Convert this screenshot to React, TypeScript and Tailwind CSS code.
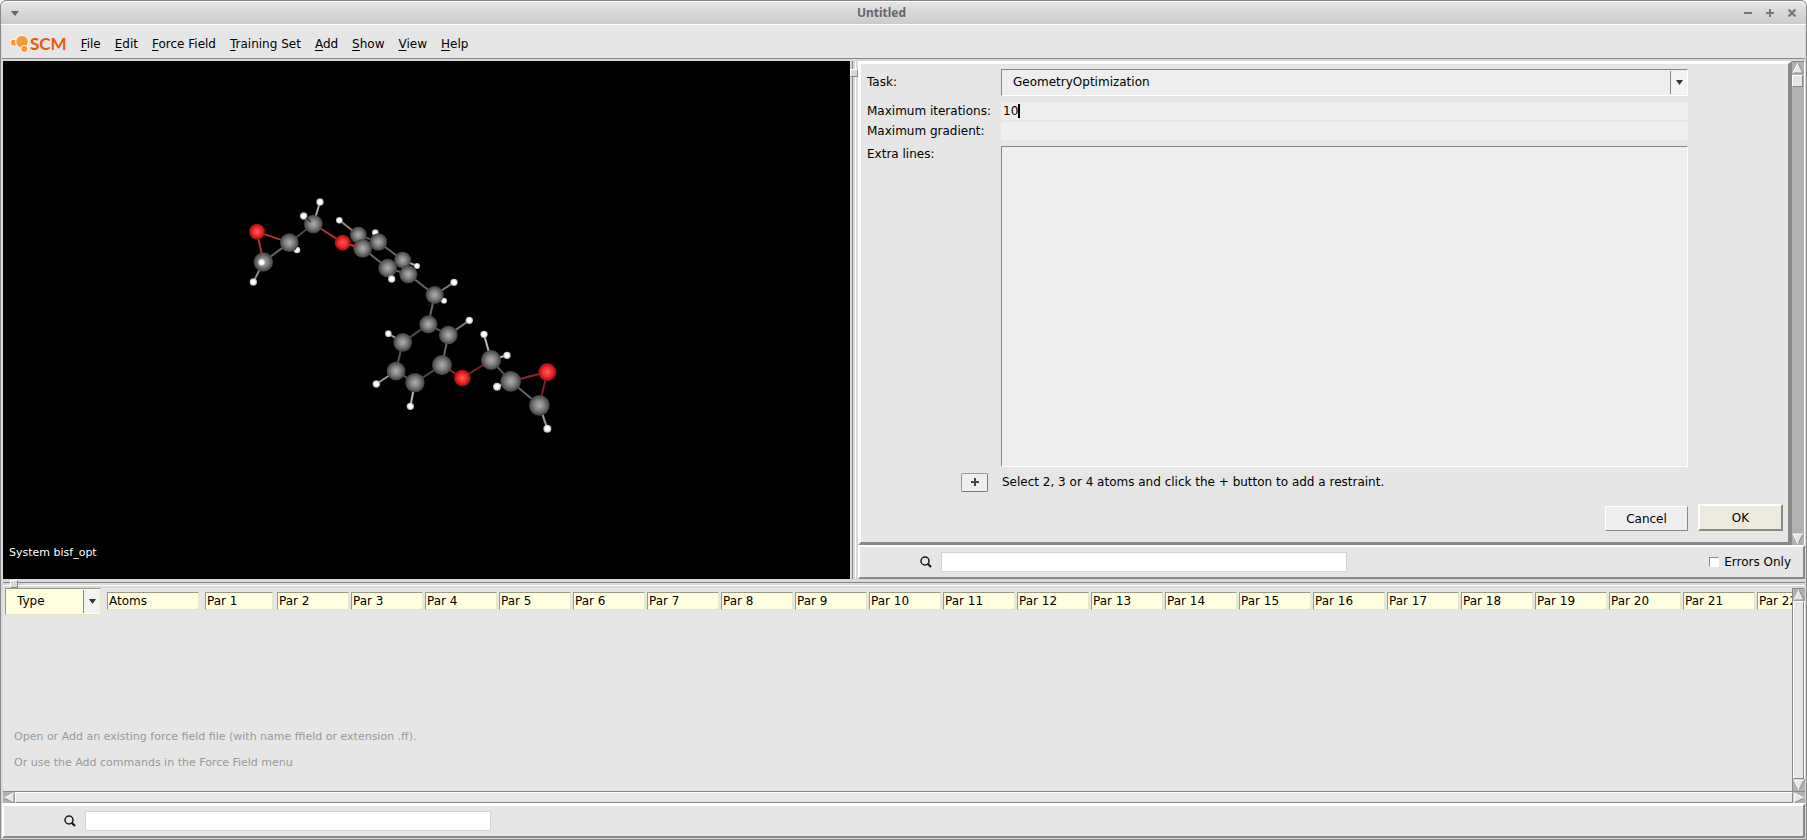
import { useState } from "react";

type Atom = { x: number; y: number; r: number; kind: "c" | "o" | "h" };

const bonds: [number, number, number, number, string][] = [
  [81, 155, 178, 188, "#b03434"],
  [81, 155, 100, 246, "#b03434"],
  [178, 188, 100, 246, "#666"],
  [178, 188, 250, 132, "#4a4a4a"],
  [178, 188, 201, 210, "#aaa"],
  [100, 246, 70, 306, "#888"],
  [250, 132, 270, 66, "#aaa"],
  [250, 132, 338, 188, "#b03434"],
  [338, 188, 398, 205, "#a02c2c"],
  [328, 121, 385, 165, "#888"],
  [436, 158, 445, 186, "#aaa"],
  [385, 165, 398, 205, "#555"],
  [385, 165, 445, 186, "#555"],
  [445, 186, 518, 240, "#666"],
  [398, 205, 473, 264, "#666"],
  [473, 264, 535, 283, "#666"],
  [518, 240, 535, 283, "#555"],
  [518, 240, 561, 258, "#aaa"],
  [473, 264, 485, 297, "#bbb"],
  [535, 283, 614, 345, "#666"],
  [614, 345, 672, 307, "#777"],
  [614, 345, 642, 362, "#aaa"],
  [614, 345, 595, 433, "#666"],
  [595, 433, 655, 465, "#555"],
  [595, 433, 518, 487, "#4a4a4a"],
  [655, 465, 718, 421, "#777"],
  [655, 465, 636, 555, "#666"],
  [518, 487, 475, 461, "#999"],
  [518, 487, 498, 573, "#555"],
  [498, 573, 439, 612, "#999"],
  [498, 573, 555, 608, "#555"],
  [555, 608, 541, 679, "#bbb"],
  [555, 608, 636, 555, "#4a4a4a"],
  [636, 555, 697, 594, "#9c2a2a"],
  [697, 594, 783, 540, "#7a2222"],
  [783, 540, 762, 463, "#bbb"],
  [783, 540, 831, 526, "#bbb"],
  [783, 540, 842, 604, "#555"],
  [842, 604, 801, 620, "#bbb"],
  [842, 604, 952, 576, "#8c2626"],
  [842, 604, 928, 676, "#666"],
  [952, 576, 928, 676, "#7a2222"],
  [928, 676, 952, 746, "#999"],
];

const atoms: Atom[] = [
  { x: 201, y: 210, r: 10, kind: "h" },
  { x: 81, y: 155, r: 24, kind: "o" },
  { x: 178, y: 188, r: 28, kind: "c" },
  { x: 100, y: 246, r: 29, kind: "c" },
  { x: 95, y: 247, r: 11, kind: "h" },
  { x: 70, y: 306, r: 11, kind: "h" },
  { x: 250, y: 132, r: 28, kind: "c" },
  { x: 221, y: 108, r: 11, kind: "h" },
  { x: 270, y: 66, r: 11, kind: "h" },
  { x: 328, y: 121, r: 10, kind: "h" },
  { x: 436, y: 158, r: 10, kind: "h" },
  { x: 385, y: 165, r: 25, kind: "c" },
  { x: 445, y: 186, r: 26, kind: "c" },
  { x: 338, y: 188, r: 24, kind: "o" },
  { x: 398, y: 205, r: 28, kind: "c" },
  { x: 518, y: 240, r: 25, kind: "c" },
  { x: 561, y: 258, r: 9, kind: "h" },
  { x: 473, y: 264, r: 28, kind: "c" },
  { x: 535, y: 283, r: 27, kind: "c" },
  { x: 485, y: 297, r: 11, kind: "h" },
  { x: 642, y: 362, r: 9, kind: "h" },
  { x: 614, y: 345, r: 27, kind: "c" },
  { x: 672, y: 307, r: 11, kind: "h" },
  { x: 595, y: 433, r: 27, kind: "c" },
  { x: 655, y: 465, r: 28, kind: "c" },
  { x: 718, y: 421, r: 11, kind: "h" },
  { x: 475, y: 461, r: 10, kind: "h" },
  { x: 518, y: 487, r: 28, kind: "c" },
  { x: 498, y: 573, r: 28, kind: "c" },
  { x: 439, y: 612, r: 11, kind: "h" },
  { x: 555, y: 608, r: 29, kind: "c" },
  { x: 541, y: 679, r: 11, kind: "h" },
  { x: 636, y: 555, r: 30, kind: "c" },
  { x: 697, y: 594, r: 25, kind: "o" },
  { x: 831, y: 526, r: 11, kind: "h" },
  { x: 783, y: 540, r: 30, kind: "c" },
  { x: 762, y: 463, r: 11, kind: "h" },
  { x: 842, y: 604, r: 31, kind: "c" },
  { x: 801, y: 620, r: 12, kind: "h" },
  { x: 952, y: 576, r: 27, kind: "o" },
  { x: 928, y: 676, r: 31, kind: "c" },
  { x: 952, y: 746, r: 12, kind: "h" },
];

const atomFill = { c: "url(#carbon)", o: "url(#oxygen)", h: "url(#hydrogen)" };

const menus = ["File", "Edit", "Force Field", "Training Set", "Add", "Show", "View", "Help"];

const params = Array.from({ length: 22 }, (_, i) => `Par ${i + 1}`);

const Molecule = () => (
  <svg viewBox="-681 -357 2541 1554" className="block h-full w-full" aria-label="Molecule">
    <defs>
      <radialGradient id="carbon">
        <stop offset="0" stopColor="#b0b0b0" />
        <stop offset="0.5" stopColor="#808080" />
        <stop offset="1" stopColor="#404040" />
      </radialGradient>
      <radialGradient id="oxygen">
        <stop offset="0" stopColor="#ff5c5c" />
        <stop offset="0.6" stopColor="#f02424" />
        <stop offset="1" stopColor="#8c1010" />
      </radialGradient>
      <radialGradient id="hydrogen">
        <stop offset="0.5" stopColor="#fff" />
        <stop offset="1" stopColor="#aaa" />
      </radialGradient>
    </defs>
    {bonds.map(([x1, y1, x2, y2, color], i) => (
      <line key={i} x1={x1} y1={y1} x2={x2} y2={y2} stroke={color} strokeWidth="6" />
    ))}
    {atoms.map((atom, i) => (
      <circle key={i} cx={atom.x} cy={atom.y} r={atom.r} fill={atomFill[atom.kind]} />
    ))}
    <line x1="229" y1="113" x2="242" y2="126" stroke="#333" strokeWidth="5" />
    <line x1="355" y1="193" x2="380" y2="200" stroke="#b42a2a" strokeWidth="6" />
  </svg>
);

const Logo = () => (
  <div className="flex items-center">
    <svg width="20" height="18" viewBox="0 0 60 54">
      <g fill="#f39a3f" stroke="#fff" strokeWidth="3">
        <circle cx="12" cy="23" r="11" />
        <circle cx="36" cy="20" r="19" />
        <circle cx="43" cy="42" r="11" />
      </g>
    </svg>
    <span className="font-['Lato'] text-[17px] leading-5 font-bold text-[#e8590c]">SCM</span>
  </div>
);

const SearchIcon = () => (
  <svg width="12" height="12" viewBox="0 0 12 12" fill="none" stroke="#1a1a1a">
    <circle cx="5" cy="5" r="4" strokeWidth="1.5" />
    <path d="M7.5 7.5 L11 11" strokeWidth="2.2" />
  </svg>
);

const ArrowButton = ({ dir }: { dir: "up" | "down" | "left" | "right" }) => {
  const shapes = {
    up: { fill: "6,1 11,11 1,11", light: "6,1 1,11", dark: "6,1 11,11 1,11" },
    down: { fill: "1,1 11,1 6,11", light: "11,1 1,1 6,11", dark: "11,1 6,11" },
    left: { fill: "1,6 11,1 11,11", light: "1,6 11,1", dark: "11,1 11,11 1,6" },
    right: { fill: "1,1 11,6 1,11", light: "1,11 1,1 11,6", dark: "1,11 11,6" },
  };
  const s = shapes[dir];
  return (
    <button aria-label={`Scroll ${dir}`} className="block h-3 w-3 shrink-0 bg-[#b1b1b1]">
      <svg width="12" height="12" viewBox="0 0 12 12" fill="none">
        <polygon points={s.fill} fill="#e6e6e6" />
        <polyline points={s.dark} stroke="#888" />
        <polyline points={s.light} stroke="#fff" />
      </svg>
    </button>
  );
};

const Arrow = () => (
  <svg width="7" height="5" viewBox="0 0 7 5">
    <path d="M0 0 H7 L3.5 5 Z" fill="#333" />
  </svg>
);

export default function App() {
  const [task, setTask] = useState("GeometryOptimization");
  const [iterations, setIterations] = useState("10");
  const [gradient, setGradient] = useState("");
  const [extra, setExtra] = useState("");

  return (
    <div className="flex h-screen min-h-[720px] flex-col overflow-hidden rounded-t-md border border-[#888] bg-[#d9d9d9] font-['DejaVu_Sans',sans-serif] text-xs text-black">
      {/* Title bar */}
      <header className="flex h-6 shrink-0 items-center rounded-t-md border-y border-white bg-linear-to-b from-[#e4e4e4] to-[#cbcbcb] px-2.5">
        <button aria-label="Window menu">
          <svg width="8" height="5" viewBox="0 0 8 5">
            <path d="M0 0 H8 L4 5 Z" fill="#666" />
          </svg>
        </button>
        <h1 className="flex-1 text-center font-['Noto_Sans',sans-serif] font-bold text-[#666]">Untitled</h1>
        <div className="flex gap-3.5">
          <button aria-label="Minimize">
            <svg width="8" height="8" viewBox="0 0 8 8" stroke="#777" strokeWidth="2">
              <path d="M0 4 H8" />
            </svg>
          </button>
          <button aria-label="Maximize">
            <svg width="8" height="8" viewBox="0 0 8 8" stroke="#777" strokeWidth="2">
              <path d="M0 4 H8 M4 0 V8" />
            </svg>
          </button>
          <button aria-label="Close">
            <svg width="8" height="8" viewBox="0 0 8 8" stroke="#777" strokeWidth="2.2">
              <path d="M0.5 0.5 L7.5 7.5 M7.5 0.5 L0.5 7.5" />
            </svg>
          </button>
        </div>
      </header>

      {/* Menu bar */}
      <nav className="mx-px flex h-[34px] shrink-0 items-center border-b border-[#888] bg-[#e6e6e6] pt-1 pl-2">
        <Logo />
        <div className="ml-3.5 flex gap-3.5">
          {menus.map((menu) => (
            <button key={menu}>
              <span className="underline underline-offset-2">{menu[0]}</span>
              {menu.slice(1)}
            </button>
          ))}
        </div>
      </nav>

      <main className="flex min-h-0 flex-1 flex-col pt-0.5 pr-px pl-0.5">
        <div className="flex">
          {/* Viewer */}
          <section className="relative flex-[847_1_0%] bg-black">
            <div className="absolute inset-0">
              <Molecule />
            </div>
            <p className="absolute bottom-[18px] left-1.5 text-[11px] leading-4 text-white">System bisf_opt</p>
          </section>

          <div className="relative w-2 px-0.5">
            <div className="h-full border-x border-l-[#888] border-r-white" />
            <div className="absolute top-2 left-0 h-2 w-2 border border-t-white border-r-[#888] border-b-[#888] border-l-white bg-[#d9d9d9]" />
          </div>

          {/* Settings */}
          <section className="flex flex-[947_1_0%] flex-col">
            <div className="flex">
              <form
                className="flex-1 border-t-3 border-r-4 border-b-3 border-l-3 border-t-white border-r-[#888] border-b-[#888] border-l-white bg-[#e6e6e6] pt-[5px] pb-[11px] pl-1.5"
                onSubmit={(e) => e.preventDefault()}
              >
                <div className="grid grid-cols-[134px_1fr] pr-[100px]">
                  <label htmlFor="task" className="leading-[27px]">Task:</label>
                  <div className="relative mb-1.5 h-[27px] border border-t-[#888] border-r-white border-b-white border-l-[#888]">
                    <select
                      id="task"
                      value={task}
                      onChange={(e) => setTask(e.target.value)}
                      className="h-full w-full appearance-none bg-[#eee] pb-0.5 pl-[11px] outline-none"
                    >
                      <option>GeometryOptimization</option>
                    </select>
                    <span className="pointer-events-none absolute inset-y-px right-0 flex w-[17px] items-center justify-center border-l border-[#888] bg-[#f3f3f3]">
                      <Arrow />
                    </span>
                  </div>

                  <label htmlFor="iterations" className="leading-[18px]">Maximum iterations:</label>
                  <div className="relative mb-0.5 h-[18px]">
                    <input
                      id="iterations"
                      value={iterations}
                      onChange={(e) => setIterations(e.target.value)}
                      className="block h-full w-full bg-[#eee] px-0.5 outline-none"
                    />
                    <span className="absolute top-0.5 left-[17px] h-3.5 w-0.5 bg-black" />
                  </div>

                  <label htmlFor="gradient" className="leading-[18px]">Maximum gradient:</label>
                  <input
                    id="gradient"
                    value={gradient}
                    onChange={(e) => setGradient(e.target.value)}
                    className="mb-1.5 block h-[18px] bg-[#eee] px-0.5 outline-none"
                  />

                  <label htmlFor="extra" className="leading-4">Extra lines:</label>
                  <textarea
                    id="extra"
                    value={extra}
                    onChange={(e) => setExtra(e.target.value)}
                    className="block h-[321px] resize-none border border-t-[#888] border-r-white border-b-white border-l-[#888] bg-[#eee] p-1 outline-none"
                  />
                </div>
                <div className="mt-[5px] flex h-5 items-center">
                  <button
                    type="button"
                    aria-label="Add restraint"
                    className="ml-[94px] flex h-[19px] w-[27px] items-center justify-center rounded-xs border border-t-[#999] border-r-[#777] border-b-[#777] border-l-[#999] bg-[#eee]"
                  >
                    <svg width="8" height="8" viewBox="0 0 8 8" stroke="#444" strokeWidth="2">
                      <path d="M0 4 H8 M4 0 V8" />
                    </svg>
                  </button>
                  <p className="ml-3.5">Select 2, 3 or 4 atoms and click the + button to add a restraint.</p>
                </div>
                <div className="mt-3 flex items-end justify-end gap-2.5 pr-[5px]">
                  <button
                    type="button"
                    className="h-[25px] w-[83px] border border-t-white border-r-[#888] border-b-[#888] border-l-white bg-[#eee]"
                  >
                    Cancel
                  </button>
                  <button
                    type="submit"
                    className="h-[27px] w-[85px] border-2 border-t-white border-r-[#8c8a80] border-b-[#8c8a80] border-l-white bg-[#ece9df]"
                  >
                    OK
                  </button>
                </div>
              </form>
              <div className="flex w-[13px] flex-col border-t border-r border-t-[#888] border-r-white bg-[#b1b1b1]">
                <ArrowButton dir="up" />
                <div className="mt-px h-3 w-[11px] border border-t-white border-r-[#888] border-b-[#888] border-l-white bg-[#e6e6e6]" />
                <div className="flex-1" />
                <ArrowButton dir="down" />
              </div>
            </div>

            <div className="flex h-[34px] items-center border-2 border-t-white border-r-[#888] border-b-[#888] border-l-white bg-[#e6e6e6] pl-[60px]">
              <SearchIcon />
              <input aria-label="Search settings" className="ml-[9px] h-5 w-[406px] border border-[#d5d5d5] bg-white px-1 outline-none" />
              <label className="mr-3 ml-auto flex items-center gap-[5px]">
                <input
                  type="checkbox"
                  className="h-2.5 w-2.5 appearance-none border border-t-[#888] border-r-white border-b-white border-l-[#888] bg-white"
                />
                Errors Only
              </label>
            </div>
          </section>
        </div>

        <div className="relative h-[9px] shrink-0 pt-[3px]">
          <div className="h-1 border-y border-t-[#888] border-b-white" />
          <div className="absolute top-px left-[7px] h-2 w-2 border border-t-white border-r-[#888] border-b-[#888] border-l-white bg-[#d9d9d9]" />
        </div>

        {/* Parameters */}
        <div className="flex min-h-0 flex-1 bg-[#e6e6e6]">
          <section className="relative min-w-0 flex-1 overflow-hidden">
            <table className="block">
              <thead className="block">
                <tr className="flex items-start pl-0.5">
                  <th className="relative mr-1.5 h-[27px] w-24 shrink-0 border border-t-[#999988] border-r-[#e6e6c0] border-b-[#e6e6c0] border-l-[#999988] font-normal">
                    <select aria-label="Type" className="block h-full w-full appearance-none bg-[#ffffe0] pb-0.5 pl-[11px] outline-none">
                      <option>Type</option>
                    </select>
                    <span className="pointer-events-none absolute inset-y-px right-0 flex w-[17px] items-center justify-center border-l border-[#888] bg-[#f3f3f3]">
                      <Arrow />
                    </span>
                  </th>
                  <th className="mt-1 mr-1.5 h-[18px] w-[92px] shrink-0 border border-t-[#999988] border-r-[#e6e6c0] border-b-[#e6e6c0] border-l-[#999988] bg-[#ffffe0] pl-px text-left leading-4 font-normal">
                    Atoms
                  </th>
                  {params.map((param) => (
                    <th
                      key={param}
                      className="mt-1 mr-0.5 h-[18px] w-[72px] shrink-0 border border-t-[#999988] border-r-[#e6e6c0] border-b-[#e6e6c0] border-l-[#999988] bg-[#ffffe0] pl-px text-left leading-4 font-normal nth-3:mr-1 nth-3:w-[68px]"
                    >
                      {param}
                    </th>
                  ))}
                </tr>
              </thead>
            </table>
            <div className="absolute bottom-[15px] left-[11px] text-[11px] leading-[26px] text-[#999]">
              <p>Open or Add an existing force field file (with name ffield or extension .ff).</p>
              <p>Or use the Add commands in the Force Field menu</p>
            </div>
          </section>
          <div className="flex w-[13px] flex-col border-x border-t border-t-[#888] border-r-white border-l-[#888]">
            <ArrowButton dir="up" />
            <div className="flex-1 border border-t-white border-r-[#888] border-b-[#888] border-l-white bg-[#e6e6e6]" />
            <ArrowButton dir="down" />
          </div>
        </div>
        <div className="flex h-3 shrink-0 border-t border-[#888]">
          <ArrowButton dir="left" />
          <div className="flex-1 border border-t-white border-r-[#888] border-b-[#888] border-l-white bg-[#e6e6e6]" />
          <ArrowButton dir="right" />
        </div>
      </main>

      <footer className="mx-px mb-px flex h-[35px] shrink-0 items-center border-2 border-t-3 border-t-white border-r-[#888] border-b-[#888] border-l-white bg-[#e6e6e6] pl-[60px]">
        <SearchIcon />
        <input aria-label="Search parameters" className="ml-[9px] h-5 w-[406px] border border-[#d5d5d5] bg-white px-1 outline-none" />
      </footer>
    </div>
  );
}
